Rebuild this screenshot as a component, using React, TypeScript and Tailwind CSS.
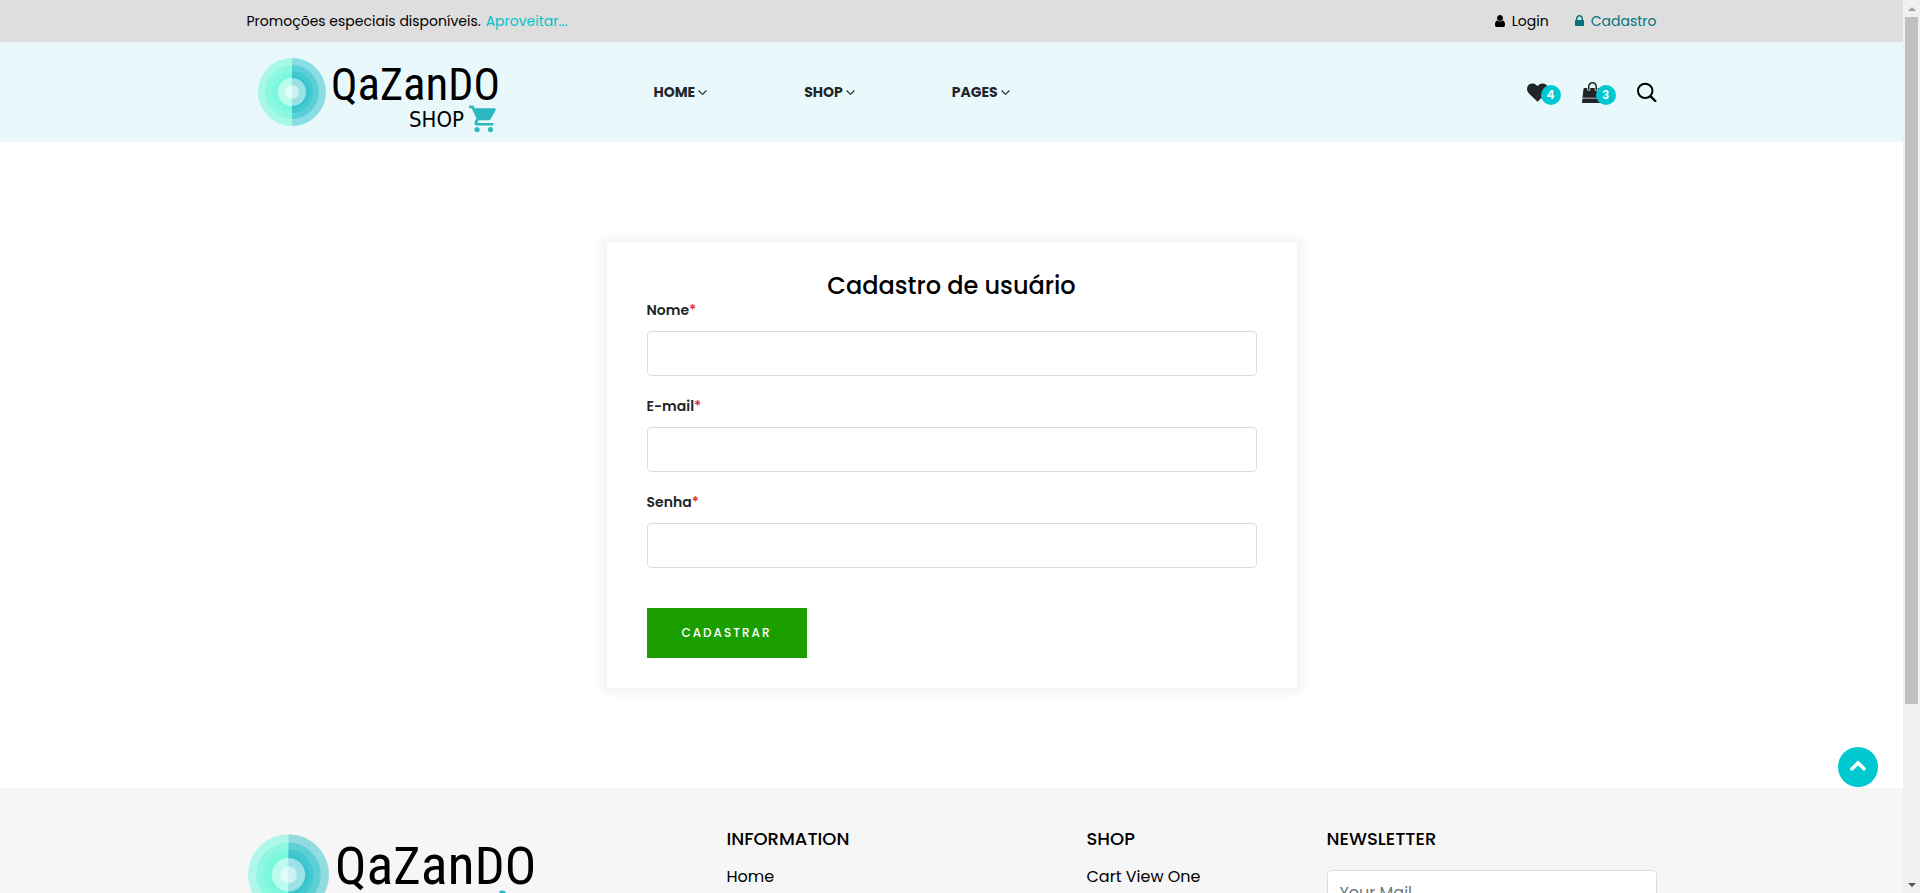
import React, { useId } from "react";

function Logo({ className }: { className: string }) {
  const id = useId();
  const left = `${id}-left`;
  const right = `${id}-right`;
  const rings = [34, 27, 21, 17];
  return (
    <svg viewBox="0 0 240 76" className={className} role="img" aria-label="Qazando Shop">
      <defs>
        <clipPath id={left}>
          <rect x="0" y="0" width="34" height="68" />
        </clipPath>
        <clipPath id={right}>
          <rect x="34" y="0" width="34" height="68" />
        </clipPath>
      </defs>
      <g clipPath={`url(#${left})`} fill="#72f7dc">
        {rings.map((r) => (
          <circle key={r} cx="34" cy="34" r={r} opacity="0.54" />
        ))}
      </g>
      <g clipPath={`url(#${right})`} fill="#2bc1cb">
        {rings.map((r) => (
          <circle key={r} cx="34" cy="34" r={r} opacity="0.5" />
        ))}
      </g>
      <circle cx="34" cy="34" r="14" fill="#fff" opacity="0.5" />
      <circle cx="34" cy="34" r="7" fill="#fff" opacity="0.5" />
      <text
        x="73"
        y="42"
        fill="#000"
        fontSize="44"
        fontWeight="400"
        fontFamily='"Roboto Condensed", "Roboto", sans-serif'
      >
        Q<tspan fontSize="47">a</tspan>Z<tspan fontSize="47">an</tspan>DO
      </text>
      <text x="151" y="69" fill="#000" fontSize="22" fontFamily='"DejaVu Sans Condensed", sans-serif'>
        SHOP
      </text>
      <path
        transform="translate(209.7 44.8) scale(1.34)"
        fill="#2bb8c2"
        d="M7 18c-1.1 0-1.99.9-1.99 2S5.9 22 7 22s2-.9 2-2-.9-2-2-2zM1 2v2h2l3.6 7.59-1.35 2.45c-.16.28-.25.61-.25.96 0 1.1.9 2 2 2h12v-2H7.42c-.14 0-.25-.11-.25-.25l.03-.12.9-1.63h7.45c.75 0 1.41-.41 1.75-1.03l3.58-6.49c.08-.14.12-.31.12-.48 0-.55-.45-1-1-1H5.21l-.94-2H1zm16 16c-1.1 0-1.99.9-1.99 2s.89 2 1.99 2 2-.9 2-2-.9-2-2-2z"
      />
    </svg>
  );
}

const UserIcon = () => (
  <svg viewBox="256 0 1280 1792" className="h-[14px] w-[10px]" fill="currentColor" aria-hidden="true">
    <path d="M1536 1399q0 109 -62.5 187t-150.5 78h-854q-88 0 -150.5 -78t-62.5 -187q0 -85 8.5 -160.5t31.5 -152t58.5 -131t94 -89t134.5 -34.5q131 128 313 128t313 -128q76 0 134.5 34.5t94 89t58.5 131t31.5 152t8.5 160.5zM1280 512q0 159 -112.5 271.5t-271.5 112.5t-271.5 -112.5t-112.5 -271.5t112.5 -271.5t271.5 -112.5t271.5 112.5t112.5 271.5z" />
  </svg>
);

const LockIcon = () => (
  <svg viewBox="320 0 1152 1792" className="h-[14px] w-[9px]" fill="currentColor" aria-hidden="true">
    <path d="M640 768h512v-192q0-106-75-181t-181-75-181 75-75 181v192zm832 96v576q0 40-28 68t-68 28h-960q-40 0-68-28t-28-68v-576q0-40 28-68t68-28h32v-192q0-184 132-316t316-132 316 132 132 316v192h32q40 0 68 28t28 68z" />
  </svg>
);

const HeartIcon = () => (
  <svg viewBox="0 0 1792 1792" className="size-[21px]" fill="currentColor" aria-hidden="true">
    <path d="M896 1664q-26 0-44-18l-624-602q-10-8-27.5-26t-55.5-65.5-68-97.5-53.5-121-23.5-138q0-220 127-344t351-124q62 0 126.5 21.5t120 58 95.5 68.5 76 68q36-36 76-68t95.5-68.5 120-58 126.5-21.5q224 0 351 124t127 344q0 221-229 450l-623 600q-18 18-44 18z" />
  </svg>
);

const BagIcon = () => (
  <svg viewBox="0 0 1792 1792" className="size-[21px]" fill="currentColor" aria-hidden="true">
    <path d="M1757 1408l35 313q3 28-16 50-19 21-48 21h-1664q-29 0-48-21-19-22-16-50l35-313h1722zm-93-839l86 775h-1708l86-775q3-24 21-40.5t43-16.5h256v128q0 53 37.5 90.5t90.5 37.5 90.5-37.5 37.5-90.5v-128h384v128q0 53 37.5 90.5t90.5 37.5 90.5-37.5 37.5-90.5v-128h256q25 0 43 16.5t21 40.5zm-384-185v256q0 26-19 45t-45 19-45-19-19-45v-256q0-106-75-181t-181-75-181 75-75 181v256q0 26-19 45t-45 19-45-19-19-45v-256q0-159 112.5-271.5t271.5-112.5 271.5 112.5 112.5 271.5z" />
  </svg>
);

const SearchIcon = () => (
  <svg viewBox="0 0 20 20" className="size-5" fill="none" stroke="#000" aria-hidden="true">
    <circle cx="8.2" cy="8.9" r="7.2" strokeWidth="2" />
    <path d="M13.4 14.1l4.9 4.9" strokeWidth="2.4" strokeLinecap="round" />
  </svg>
);

const AngleDown = () => (
  <svg viewBox="0 0 9 5" className="h-[5px] w-[9px]" fill="none" stroke="currentColor" strokeWidth="1.1" aria-hidden="true">
    <path d="M0.6 0.5L4.5 4.3 8.4 0.5" />
  </svg>
);

function Badge({ count }: { count: number }) {
  return (
    <span className="absolute top-[3px] left-[14px] flex size-5 items-center justify-center rounded-full bg-[#00c8d0] text-xs font-semibold text-white">
      {count}
    </span>
  );
}

function Field({ id, label, type }: { id: string; label: string; type: string }) {
  return (
    <div>
      <label htmlFor={id} className="mb-[10px] block text-sm leading-[21px] font-semibold text-[#212529]">
        {label}
        <span className="text-[#dc3545]">*</span>
      </label>
      <input
        id={id}
        type={type}
        className="block h-[45px] w-full rounded border border-[#dcdcdc] bg-white px-3 text-base outline-none focus:border-[#00c8d0]"
      />
    </div>
  );
}

const navItems = ["HOME", "SHOP", "PAGES"];
const container = "mx-auto w-full max-w-[1440px] px-[15px]";

export default function App() {
  return (
    <div className="flex h-screen bg-white font-['Poppins','Inter',sans-serif] text-black">
      <div className="relative min-w-0 flex-1 overflow-hidden">
        <div className="bg-[#dedede]">
          <div className={`${container} flex h-[42px] items-center justify-between text-sm`}>
            <p className="flex gap-[5px]">
              Promoções especiais disponíveis.
              <a href="#promocoes" className="text-[#00c4ca]">
                Aproveitar...
              </a>
            </p>
            <div className="flex items-center gap-[26px]">
              <a href="#login" className="flex items-center gap-[7px]">
                <UserIcon />
                Login
              </a>
              <a href="#cadastro" className="flex items-center gap-[7px] text-[#04747a]">
                <LockIcon />
                Cadastro
              </a>
            </div>
          </div>
        </div>

        <header className="bg-[#e8f8fb]">
          <div className={`${container} grid h-[100px] grid-cols-12 items-center gap-[30px]`}>
            <a href="#inicio" className="col-span-3 pt-2 pl-[11px]">
              <Logo className="h-[76px] w-60 overflow-visible" />
            </a>
            <nav className="col-span-6 flex gap-[97px] pl-[47px] text-sm font-bold text-[#212529]">
              {navItems.map((item) => (
                <a key={item} href={`#${item.toLowerCase()}`} className="flex items-center gap-[3px]">
                  {item}
                  <AngleDown />
                </a>
              ))}
            </nav>
            <div className="col-span-3 flex items-center justify-end gap-[34px] text-[#212529]">
              <a href="#favoritos" aria-label="Favoritos" className="relative">
                <HeartIcon />
                <Badge count={4} />
              </a>
              <a href="#carrinho" aria-label="Carrinho" className="relative">
                <BagIcon />
                <Badge count={3} />
              </a>
              <button type="button" aria-label="Buscar">
                <SearchIcon />
              </button>
            </div>
          </div>
        </header>

        <main className="py-[100px]">
          <form className="mx-auto max-w-[690px] bg-white px-10 py-[30px] shadow-[0_0_10px_5px_rgba(0,0,0,0.05)]">
            <h1 className="text-center text-2xl leading-7 font-medium">Cadastro de usuário</h1>
            <div className="flex flex-col gap-5">
              <Field id="nome" label="Nome" type="text" />
              <Field id="email" label="E-mail" type="email" />
              <Field id="senha" label="Senha" type="password" />
            </div>
            <button
              type="submit"
              className="mt-10 h-[50px] w-40 bg-[#1b9f00] text-xs font-medium tracking-[2px] text-white"
            >
              CADASTRAR
            </button>
          </form>
        </main>

        <footer className="bg-[#f6f6f6] py-10">
          <div className={`${container} grid grid-cols-12 gap-[30px]`}>
            <div className="col-span-4 pt-1.5 pl-px">
              <Logo className="h-[91px] w-[286px] overflow-visible" />
            </div>
            <div className="col-span-3">
              <h2 className="text-lg leading-[22px] font-medium">INFORMATION</h2>
              <a href="#home" className="mt-[15px] block text-base">
                Home
              </a>
            </div>
            <div className="col-span-2">
              <h2 className="text-lg leading-[22px] font-medium">SHOP</h2>
              <a href="#cart" className="mt-[15px] block text-base">
                Cart View One
              </a>
            </div>
            <div className="col-span-3">
              <h2 className="text-lg leading-[22px] font-medium">NEWSLETTER</h2>
              <input
                type="email"
                aria-label="Your Mail"
                placeholder="Your Mail"
                className="mt-5 block h-[45px] w-full rounded border border-[#dcdcdc] bg-white px-3 text-base outline-none placeholder:text-[#6c757d]"
              />
            </div>
          </div>
        </footer>

        <button
          type="button"
          aria-label="Voltar ao topo"
          className="absolute right-[25px] bottom-[106px] flex size-10 items-center justify-center rounded-full bg-[#00c8d0] pb-1"
        >
          <svg viewBox="0 0 16 11" className="h-[11px] w-4" fill="none" stroke="#fff" strokeWidth="3.6" aria-hidden="true">
            <path d="M2 8.8L8 3l6 5.8" strokeLinecap="round" />
          </svg>
        </button>
      </div>

      <div aria-hidden="true" className="flex w-[17px] shrink-0 flex-col bg-[#f0f0f0]">
        <div className="flex h-[17px] items-center justify-center">
          <svg viewBox="0 0 8 4" className="h-1 w-2" fill="#a3a3a3">
            <path d="M0 4L4 0l4 4z" />
          </svg>
        </div>
        <div className="flex-1 px-0.5">
          <div className="h-[80%] bg-[#c1c1c1]" />
        </div>
        <div className="flex h-[17px] items-center justify-center">
          <svg viewBox="0 0 8 4" className="h-1 w-2" fill="#505050">
            <path d="M0 0h8L4 4z" />
          </svg>
        </div>
      </div>
    </div>
  );
}
